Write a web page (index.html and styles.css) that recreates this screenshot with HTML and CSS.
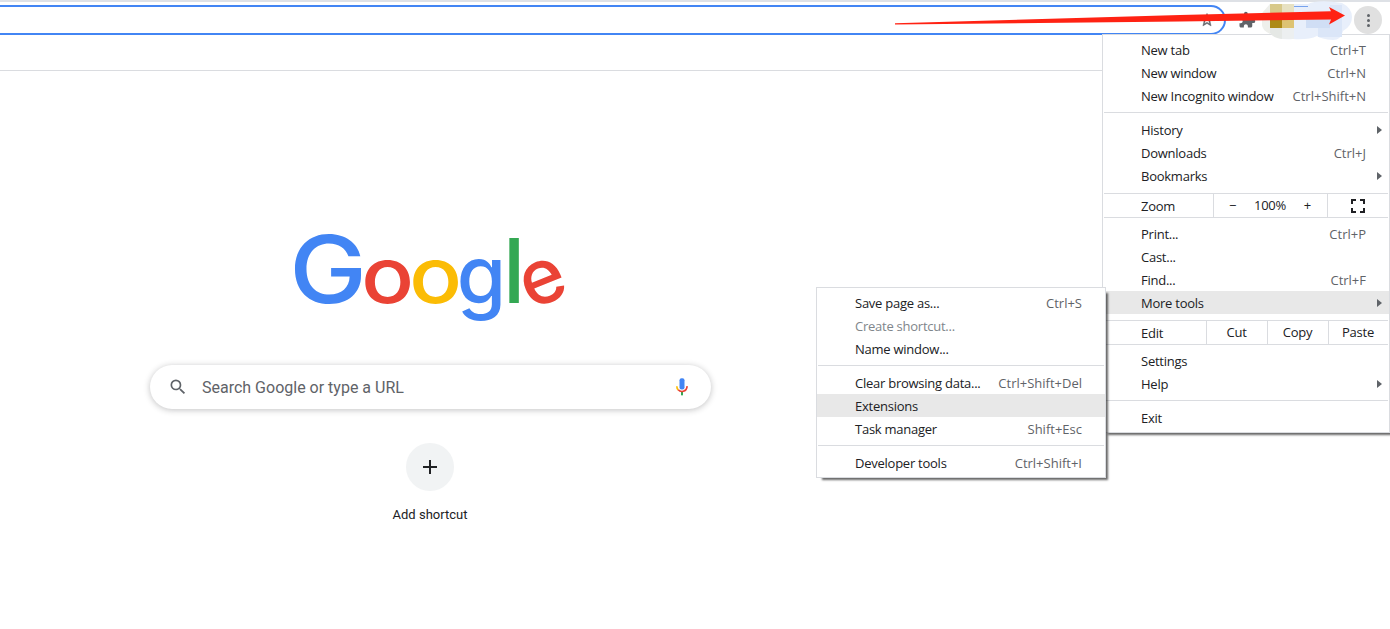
FILE: index.html
```html
<!DOCTYPE html>
<html lang="en">
<head>
    <meta charset="UTF-8">
    <meta name="viewport" content="width=device-width, initial-scale=1.0">
    <title>New Tab</title>
    <link rel="stylesheet" href="styles.css">
</head>
<body>
    <header class="toolbar">
        <div class="omnibox">
            <svg class="star" width="16" height="16" viewBox="0 0 24 24"><path d="M22 9.24l-7.19-.62L12 2 9.19 8.63 2 9.24l5.46 4.73L5.82 21 12 17.27 18.18 21l-1.63-7.03L22 9.24zM12 15.4l-3.76 2.27 1-4.28-3.32-2.88 4.38-.38L12 6.1l1.71 4.04 4.38.38-3.32 2.88 1 4.28L12 15.4z"/></svg>
        </div>
        <svg class="puzzle" width="18" height="18" viewBox="0 0 24 24"><path d="M20.5 11H19V7c0-1.1-.9-2-2-2h-4V3.500a2.500 2.500 0 0 0-5 0V5H4c-1.100 0-1.990.9-1.990 2v3.800H3.500c1.490 0 2.700 1.210 2.700 2.700s-1.210 2.700-2.700 2.700H2V20c0 1.100.9 2 2 2h3.800v-1.500c0-1.490 1.210-2.700 2.700-2.700 1.490 0 2.700 1.210 2.700 2.700V22H17c1.100 0 2-.9 2-2v-4h1.500a2.500 2.500 0 0 0 0-5z"/></svg>
        <button class="menu-btn" aria-label="Menu"><span></span><span></span><span></span></button>
    </header>
    <div class="bookmarks-bar"></div>

    <main class="ntp">
        <svg class="logo" width="272" height="92" viewBox="0 0 272 92" role="img" aria-label="Google">
            <text class="blue" transform="translate(34 70.200) scale(1.130 1.010)" font-size="92">G</text>
            <text class="red" transform="translate(93.500 70.300) scale(1.120 1)" font-size="78">o</text>
            <text class="yellow" transform="translate(141.500 70.300) scale(1.120 1)" font-size="78">o</text>
            <text class="blue" transform="translate(187.500 70.800) scale(1.050 1.060)" font-size="76">g</text>
            <text class="green" transform="translate(220 70) scale(1 1.010)" font-size="88">l</text>
            <text class="red" transform="translate(249 49) rotate(-22) translate(0 21.300) scale(1 1.010)" font-size="76">e</text>
        </svg>

        <div class="search-box">
            <svg width="20" height="20" viewBox="0 0 24 24"><path fill="#5f6368" d="M15.500 14h-.79l-.28-.27A6.470 6.470 0 0 0 16 9.500 6.500 6.500 0 1 0 9.500 16c1.610 0 3.090-.59 4.230-1.570l.27.28v.79l5 4.990L20.490 19l-4.990-5zm-6 0C7.010 14 5 11.990 5 9.500S7.010 5 9.500 5 14 7.010 14 9.500 11.990 14 9.500 14z"/></svg>
            <span class="placeholder">Search Google or type a URL</span>
            <svg width="20" height="20" viewBox="0 0 24 24">
                <rect x="9" y="1.500" width="6" height="13.500" rx="2.500" fill="#4285f4"/>
                <rect x="10.800" y="18" width="2.400" height="4" fill="#34a853"/>
                <path d="M5.800 11c0 2 .6 3.500 1.700 4.500" fill="none" stroke="#fbbc05" stroke-width="2"/>
                <path d="M7.500 15.200C10 18.500 17.500 18.500 18.200 11" fill="none" stroke="#ea4335" stroke-width="2"/>
            </svg>
        </div>

        <div class="shortcut">
            <div class="shortcut-icon"></div>
            <span>Add shortcut</span>
        </div>
    </main>

    <nav class="menu main-menu">
        <div class="item">New tab<kbd>Ctrl+T</kbd></div>
        <div class="item">New window<kbd>Ctrl+N</kbd></div>
        <div class="item">New Incognito window<kbd>Ctrl+Shift+N</kbd></div>
        <hr>
        <div class="item sub">History</div>
        <div class="item">Downloads<kbd>Ctrl+J</kbd></div>
        <div class="item sub">Bookmarks</div>
        <div class="row zoom-row">
            <span class="label">Zoom</span>
            <span class="cell zoom-cell"><span>−</span><span>100%</span><span>+</span></span>
            <span class="cell full-cell">
                <svg width="14" height="14" viewBox="0 0 14 14"><path d="M1 5V1h4M9 1h4v4M13 9v4H9M5 13H1V9" fill="none" stroke="#202124" stroke-width="2"/></svg>
            </span>
        </div>
        <div class="item">Print...<kbd>Ctrl+P</kbd></div>
        <div class="item">Cast...</div>
        <div class="item">Find...<kbd>Ctrl+F</kbd></div>
        <div class="item sub active">More tools</div>
        <div class="row edit-row">
            <span class="label">Edit</span>
            <span class="cell">Cut</span>
            <span class="cell">Copy</span>
            <span class="cell">Paste</span>
        </div>
        <div class="item">Settings</div>
        <div class="item sub">Help</div>
        <hr>
        <div class="item">Exit</div>
    </nav>

    <nav class="menu tools-menu">
        <div class="item">Save page as...<kbd>Ctrl+S</kbd></div>
        <div class="item disabled">Create shortcut...</div>
        <div class="item">Name window...</div>
        <hr>
        <div class="item">Clear browsing data...<kbd>Ctrl+Shift+Del</kbd></div>
        <div class="item active">Extensions</div>
        <div class="item">Task manager<kbd>Shift+Esc</kbd></div>
        <hr>
        <div class="item">Developer tools<kbd>Ctrl+Shift+I</kbd></div>
    </nav>

    <!-- blurred extension icons and the arrow pointing at the menu button -->
    <svg class="overlay" width="510" height="42" viewBox="880 0 510 42">
        <path fill="#e8effb" d="M1270 4h38q10-5 34-1 10 5 10 14t-9 14q-2 9-10 9-12-1-16-4-8 4-24 3-16 2-23-7-9-5-8-12t8-16z"/>
        <path fill="#eeefeb" d="M1262 13l8-9v30q-8-4-8-9z"/>
        <path fill="#e5e8e5" d="M1270 28h12v11q-9-1-12-6z"/>
        <path fill="#eceff0" d="M1282 28h12v11h-12z"/>
        <path fill="#d0def5" d="M1306 16h24v12h-24z"/>
        <path fill="#dbe6f8" d="M1318 28h24v9h-24zM1330 5h12v23h-12z"/>
        <path fill="#d8c98a" d="M1270 4h12v12h-12z"/>
        <path fill="#ddc373" d="M1282 16h12v12h-12z"/>
        <path fill="#e7e1c2" d="M1282 4h12v12h-12z"/>
        <path fill="#ad8a16" d="M1270 16h12v12h-12z"/>
        <path fill="#77a2ed" d="M1294 6h14v1h-14z"/>
        <path fill="#ff2213" d="M895 23.200L1180 15l151-3.700-2-4.300 16 8.500-16 9 2-5-151 2-285 3z"/>
    </svg>
</body>
</html>
```
FILE: styles.css
```css
* {
    box-sizing: border-box;
}

body {
    margin: 0;
    height: 629px;
    overflow: hidden;
    background: #fff;
    color: #202124;
    font-family: "Open Sans", sans-serif;
    font-size: 13px;
}

/* Toolbar */
.toolbar {
    display: flex;
    align-items: center;
    height: 36px;
    border-top: 2px solid #dee1e6;
    padding: 2px 8px 0 0;
}

.omnibox {
    display: flex;
    align-items: center;
    justify-content: flex-end;
    width: 1226px;
    height: 30px;
    padding-right: 9px;
    border: 2px solid #4285f4;
    border-left: 0;
    border-radius: 0 15px 15px 0;
}

.star,
.puzzle {
    fill: #5f6368;
}

.star {
    stroke: #5f6368;
    stroke-width: 0.6;
}

.puzzle {
    margin-left: 12px;
}

.menu-btn {
    display: flex;
    flex-direction: column;
    align-items: center;
    justify-content: center;
    gap: 2px;
    width: 28px;
    height: 28px;
    margin-left: auto;
    padding: 0;
    border: 0;
    border-radius: 50%;
    background: #e0e0e0;
}

.menu-btn span {
    width: 3px;
    height: 3px;
    border-radius: 50%;
    background: #5f6368;
}

.bookmarks-bar {
    height: 35px;
    border-bottom: 1px solid #dadce0;
}

/* New tab page */
.ntp {
    display: flex;
    flex-direction: column;
    align-items: center;
    width: 860px;
    padding-top: 162px;
}

.logo {
    overflow: visible;
    font-family: Inter, sans-serif;
    font-weight: 500;
    text-anchor: middle;
}

.blue { fill: #4285f4; }
.red { fill: #ea4335; }
.yellow { fill: #fbbc05; }
.green { fill: #34a853; }

.search-box {
    display: flex;
    align-items: center;
    width: 561px;
    height: 44px;
    margin: 40px 0 0 1px;
    padding: 0 19px 0 18px;
    border-radius: 22px;
    box-shadow: 0 1px 6px rgba(32, 33, 36, 0.28);
}

.placeholder {
    flex: 1;
    margin-left: 14px;
    color: #5f6368;
    font-family: Roboto, sans-serif;
    font-size: 16px;
}

.shortcut {
    display: flex;
    flex-direction: column;
    align-items: center;
    margin-top: 34px;
    font-family: Roboto, sans-serif;
    line-height: 16px;
}

.shortcut-icon {
    width: 48px;
    height: 48px;
    margin-bottom: 16px;
    border-radius: 50%;
    background:
        linear-gradient(#202124, #202124) center / 14px 2px no-repeat,
        linear-gradient(#202124, #202124) center / 2px 14px no-repeat,
        #f1f3f4;
}

/* Menus */
.menu {
    position: absolute;
    padding: 3px 0;
    border: 1px solid #dadce0;
    background: #fff;
    box-shadow: 4px 4px 2px -2px rgba(0, 0, 0, 0.6);
    letter-spacing: -0.25px;
}

.main-menu {
    top: 34px;
    left: 1102px;
    width: 288px;
}

.tools-menu {
    top: 287px;
    left: 816px;
    width: 290px;
}

.item {
    display: flex;
    align-items: center;
    justify-content: space-between;
    height: 23px;
    padding: 1px 23px 0 38px;
}

.item.active {
    background: #e8e8e8;
}

.item.disabled {
    color: #80868b;
}

.item.sub {
    padding-right: 7px;
}

.item.sub::after {
    content: "";
    border: 4px solid transparent;
    border-left: 5px solid #5f6368;
    border-right: 0;
}

kbd {
    color: #5f6368;
    font-family: inherit;
    font-size: inherit;
    letter-spacing: 0;
}

.menu hr {
    height: 1px;
    margin: 5px 1px;
    border: 0;
    background: #dadce0;
}

.row {
    display: flex;
    height: 25px;
    margin: 6px 1px 4px;
    border: solid #dadce0;
    border-width: 1px 0;
}

.row .label {
    flex: 1;
    padding: 3px 0 0 37px;
}

.cell {
    display: flex;
    align-items: center;
    justify-content: center;
    width: 61px;
    padding: 0 1px 1px 0;
    border-left: 1px solid #dadce0;
}

.edit-row .cell:last-child {
    width: 60px;
}

.zoom-cell {
    justify-content: space-between;
    width: 114px;
    padding: 0 16px 1px 15px;
}

.full-cell {
    padding: 0;
}

/* Annotation */
.overlay {
    position: absolute;
    top: 0;
    left: 880px;
}
```
